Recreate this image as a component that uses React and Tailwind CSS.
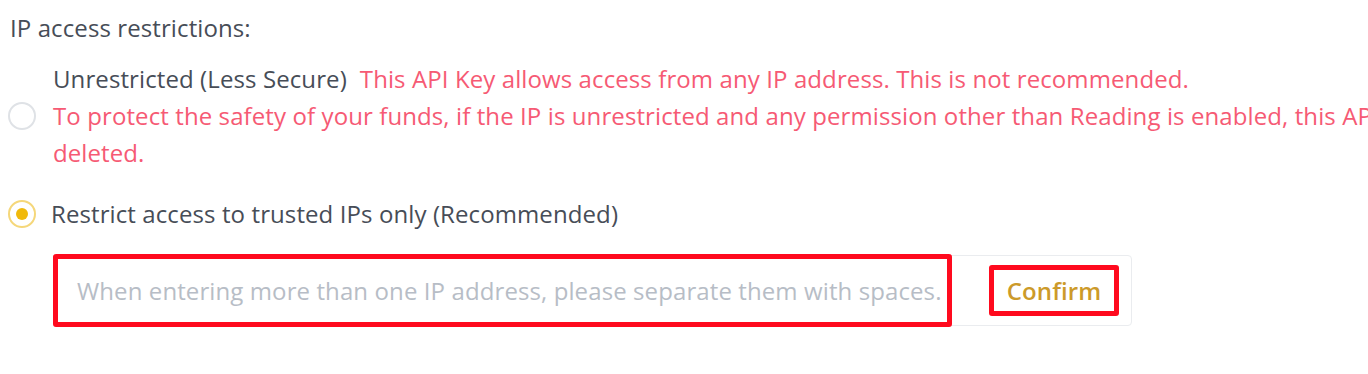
const App = () => {
  return (
    <div className="w-[1368px] h-[374px] overflow-hidden bg-white text-[24px] tracking-[0.1px] text-[#474d57]" style={{ fontFamily: '"Open Sans", "Noto Sans", sans-serif' }}>
      <div className="pl-[10px] pt-[12px] leading-[32px]">IP access restrictions:</div>

      {/* unrestricted option */}
      <div className="flex items-center mt-[16px] pl-[8px]">
        <div className="w-[28px] h-[28px] shrink-0 rounded-full border-2 border-[#dfe2e6]" />
        <div className="ml-[17px] leading-[37px] whitespace-nowrap">
          <div>
            Unrestricted (Less Secure)
            <span className="ml-[13px] text-[#f65a74]">This API Key allows access from any IP address. This is not recommended.</span>
          </div>
          <div className="text-[#f65a74]">To protect the safety of your funds, if the IP is unrestricted and any permission other than Reading is enabled, this API Key will be</div>
          <div className="text-[#f65a74]">deleted.</div>
        </div>
      </div>

      {/* restricted option */}
      <div className="flex items-center mt-[27px] pl-[8px]">
        <div className="w-[28px] h-[28px] shrink-0 rounded-full border-2 border-[#f5d77a] flex items-center justify-center">
          <div className="w-[12px] h-[12px] rounded-full bg-[#f0b90b]" />
        </div>
        <span className="ml-[15px] leading-[32px]">Restrict access to trusted IPs only (Recommended)</span>
      </div>

      <div className="ml-[53px] mt-[25px] w-[1079px] h-[71px] flex items-center border border-[#eaecef] rounded-[4px]">
        <div className="w-[899px] h-[73px] -ml-px flex items-center border-[5px] border-[#ff0a1e] rounded-[3px] pl-[19px] text-[#b7bdc6] whitespace-nowrap overflow-hidden">
          When entering more than one IP address, please separate them with spaces.
        </div>
        <div className="ml-[37px] w-[130px] h-[51px] flex items-center justify-center border-[5px] border-[#ff0a1e] rounded-[3px] font-semibold text-[#cc9a2a]">
          Confirm
        </div>
      </div>
    </div>
  );
};

export default App;
